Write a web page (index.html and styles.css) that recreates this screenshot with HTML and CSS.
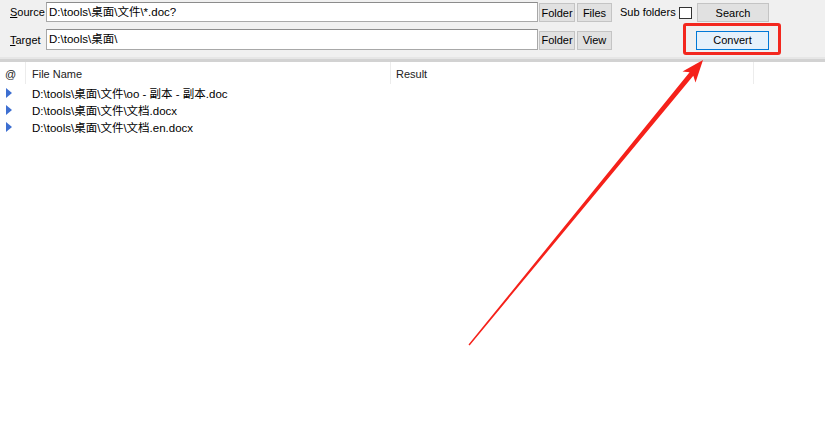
FILE: index.html
```html
<!DOCTYPE html>
<html>
<head>
<meta charset="utf-8">
<link rel="stylesheet" href="styles.css">
</head>
<body>
<div class="app">
  <div class="toolbar">
    <div class="row row1">
      <label class="lbl"><u>S</u>ource</label>
      <div class="input">D:\tools\桌面\文件\*.doc?</div>
      <button class="btn b-folder">Folder</button>
      <button class="btn b-small">Files</button>
      <span class="sub">Sub folders</span>
      <span class="check"></span>
      <button class="btn b-wide">Search</button>
    </div>
    <div class="row row2">
      <label class="lbl"><u>T</u>arget</label>
      <div class="input">D:\tools\桌面\</div>
      <button class="btn b-folder">Folder</button>
      <button class="btn b-small">View</button>
      <button class="btn b-wide b-convert">Convert</button>
    </div>
  </div>
  <div class="list">
    <div class="head">
      <div class="c0">@</div>
      <div class="c1">File Name</div>
      <div class="c2">Result</div>
      <div class="c3"></div>
    </div>
    <div class="item"><span class="tri"></span><span>D:\tools\桌面\文件\oo - 副本 - 副本.doc</span></div>
    <div class="item"><span class="tri"></span><span>D:\tools\桌面\文件\文档.docx</span></div>
    <div class="item"><span class="tri"></span><span>D:\tools\桌面\文件\文档.en.docx</span></div>
  </div>
  <div class="redbox"></div>
  <svg class="arrow" width="825" height="437" viewBox="0 0 825 437">
    <polygon fill="#f5211a" points="703,60 695.5,82.5 693.3,75.8 469.6,345.4 468.5,344.6 689.6,72.2 682.5,71.6"/>
  </svg>
</div>
</body>
</html>
```
FILE: styles.css
```css
* { box-sizing: border-box; }
html, body { margin: 0; padding: 0; background: #fff; }
body {
  font-family: "Liberation Sans", "Noto Sans CJK SC", sans-serif;
  font-size: 11px;
  color: #000;
}
.app { position: relative; width: 825px; height: 437px; overflow: hidden; }
.toolbar {
  background: #f0f0f0;
  height: 62px;
  padding-top: 2px;
  border-bottom: 3px solid #d2d2d2;
  box-shadow: inset 0 -2px 0 #e6e6e6;
}
.row { display: flex; align-items: center; height: 20px; }
.row2 { margin-top: 7px; height: 21px; }
.lbl { width: 46px; padding-left: 10px; color: #000; white-space: nowrap; }
.input {
  width: 492px; height: 100%;
  background: #fff;
  border: 1px solid #a8a8a8;
  border-top-color: #8c8c8c;
  padding: 0 0 0 2px;
  line-height: 18px;
  white-space: nowrap;
  font-size: 11.5px;
}
.btn {
  font: inherit;
  font-size: 11px;
  height: 19px;
  padding: 0;
  background: #e1e1e1;
  border: 1px solid #c4c4c4;
  color: #000;
}
.row1 .btn, .row2 .btn { margin-top: 1px; }
.b-folder { width: 36px; margin-left: 1px; }
.b-small { width: 35px; margin-left: 2px; }
.sub { margin-left: 8px; width: 59px; white-space: nowrap; }
.check { width: 13px; height: 12px; background: #fff; border: 1px solid #333; margin-top: 1px; }
.row1 .b-wide { margin-left: 5px; width: 72px; }
.row2 .b-convert {
  margin-left: 84px; width: 73px; height: 19px;
  background: #e5f1fb;
  border-color: #0078d7;
}
.list { font-size: 11px; }
.head { display: flex; height: 22px; color: #222; }
.head > div { height: 100%; display: flex; align-items: center; padding-top: 1px; }
.c0 { width: 26px; padding-left: 5px; border-right: 1px solid #ececec; }
.c1 { width: 365px; padding-left: 6px; border-right: 1px solid #ececec; }
.c2 { width: 363px; padding-left: 5px; border-right: 1px solid #ececec; }
.c3 { flex: 1; }
.item {
  display: flex; align-items: center; height: 17px;
  font-size: 11.5px;
}
.tri {
  width: 0; height: 0;
  border-top: 5px solid transparent;
  border-bottom: 5px solid transparent;
  border-left: 6px solid #3d6fd1;
  margin-left: 6px; margin-right: 20px;
}
.redbox {
  position: absolute;
  left: 683px; top: 23px; width: 98px; height: 32px;
  border: 3px solid #f3271e;
  border-radius: 3px;
}
.arrow { position: absolute; left: 0; top: 0; pointer-events: none; }
```
